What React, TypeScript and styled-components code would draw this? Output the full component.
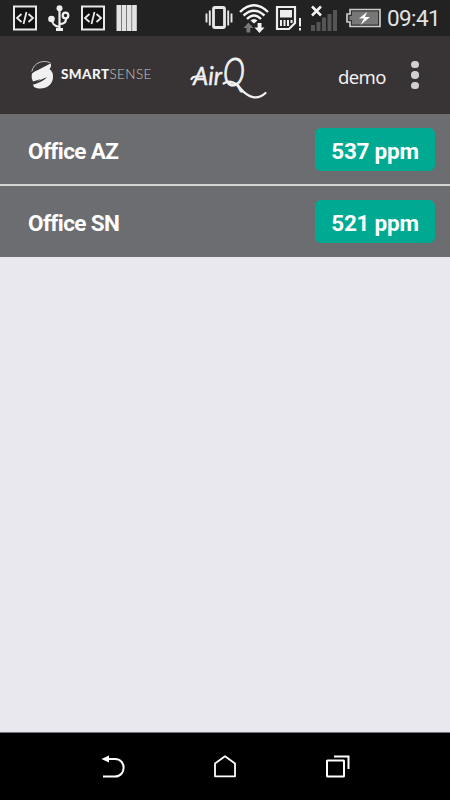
import styled, { createGlobalStyle } from 'styled-components';

const GlobalStyle = createGlobalStyle`
  * {
    box-sizing: border-box;
  }
  body {
    margin: 0;
    font-family: Roboto, "Open Sans", sans-serif;
  }
`;

const Screen = styled.div`
  display: flex;
  flex-direction: column;
  width: 450px;
  height: 800px;
  background: #e9e8ee;
`;

const StatusBar = styled.div`
  display: flex;
  justify-content: space-between;
  height: 36px;
  padding: 0 10px 0 12px;
  background: #222222;
`;

const IconGroup = styled.div<{ $gap: number }>`
  display: flex;
  align-items: center;
  gap: ${({ $gap }) => $gap}px;

  svg {
    display: block;
    flex: none;
  }
`;

const Clock = styled.span`
  width: 53px;
  font-size: 22.5px;
  line-height: 36px;
  letter-spacing: -0.6px;
  color: #e2e2e2;
  white-space: nowrap;
`;

const Header = styled.header`
  display: flex;
  align-items: center;
  height: 78px;
  padding: 0 22px 0 29px;
  background: #383435;
  color: #f0f0f0;
`;

const Brand = styled.div`
  display: flex;
  align-items: center;
  gap: 7px;
  width: 161px;
  height: 30px;
`;

const BrandName = styled.span`
  margin-top: -2px;
  font-family: Lato, sans-serif;
  font-size: 13.5px;
  line-height: 16px;
  letter-spacing: 0.4px;
  font-weight: 300;
  color: #c9c7c8;
  white-space: nowrap;

  b {
    font-weight: 900;
    color: #f4f4f4;
  }
`;

const User = styled.span`
  width: 69px;
  margin: 4px 0 0 68px;
  font-family: "Noto Sans", sans-serif;
  font-size: 18.5px;
  line-height: 24px;
  letter-spacing: -0.6px;
`;

const MenuButton = styled.button`
  display: flex;
  flex-direction: column;
  align-items: center;
  gap: 3px;
  width: 10px;
  margin: 0 0 0 3px;
  padding: 0;
  border: none;
  background: none;
  cursor: pointer;
`;

const Dot = styled.span`
  width: 7.5px;
  height: 7.5px;
  border-radius: 50%;
  background: #d0d0d0;
`;

const List = styled.main`
  flex: 1;
`;

const Row = styled.div`
  display: flex;
  align-items: center;
  justify-content: space-between;
  height: 70px;
  padding: 0 15px 0 28px;
  background: #6c6d70;
  color: #ffffff;

  & + & {
    height: 72.5px;
    border-top: 2px solid #d3d3d3;
  }
`;

const Place = styled.span`
  margin-top: 4px;
  font-size: 22.5px;
  font-weight: 700;
  letter-spacing: -0.6px;
`;

const Level = styled.span`
  display: flex;
  align-items: center;
  justify-content: center;
  width: 120px;
  height: 43px;
  border-radius: 6px;
  background: #00a991;
  padding-top: 3px;
  font-size: 22.5px;
  font-weight: 700;
  letter-spacing: -0.25px;
`;

const NavBar = styled.nav`
  display: flex;
  align-items: center;
  justify-content: center;
  gap: 88px;
  height: 68px;
  border-top: 1px solid #77767a;
  background: #000000;
`;

const places = [
  { name: 'Office AZ', level: 537 },
  { name: 'Office SN', level: 521 }
];

const CodeIcon = () => (
  <svg width="26" height="27" viewBox="0 0 26 27" fill="none" stroke="#e8e8e8">
    <rect x="2" y="1.5" width="22" height="23" fill="#111" strokeWidth="2" />
    <path d="M9.5 9 5 13l4.5 4M16.5 9l4.5 4-4.5 4M14.5 7l-3 12" strokeWidth="1.8" />
  </svg>
);

const UsbIcon = () => (
  <svg width="22" height="27" viewBox="0 0 22 27" fill="none" stroke="#efefef" strokeWidth="2.2">
    <path d="M11.5 3v22M4 14c0 5 2 7 7.5 8M18 14c0 3-2 5-6.5 5" />
    <circle cx="11.5" cy="3.2" r="3" fill="#efefef" stroke="none" />
    <circle cx="3.5" cy="14" r="3.3" fill="#efefef" stroke="none" />
    <circle cx="17.5" cy="10.5" r="2.8" />
    <path d="M8 24.5h7" strokeWidth="3" />
  </svg>
);

const BarsIcon = () => (
  <svg width="22" height="26" viewBox="0 0 22 26" fill="#e3e3e3">
    <rect x="0.5" width="4.7" height="26" />
    <rect x="5.7" width="4.7" height="26" />
    <rect x="10.9" width="4.7" height="26" />
    <rect x="16.1" width="4.7" height="26" />
  </svg>
);

const VibrateIcon = () => (
  <svg width="28" height="26" viewBox="0 0 28 26" fill="none" stroke="#e8e8e8">
    <rect x="8.5" y="2.5" width="11" height="20" rx="1.5" strokeWidth="2.8" />
    <path d="M1.5 8.5v9M4.8 5.500v15M23.2 5.500v15M26.5 8.500v9" strokeWidth="1.9" />
  </svg>
);

const WifiIcon = () => (
  <svg width="30" height="30" viewBox="0 0 30 30" fill="none" stroke="#f4f4f4" strokeWidth="2.4">
    <path d="M1 9Q15-4.5 29 9M4.5 12.5q10.5-9.5 21 0M8 16q7-7 14 0" />
    <path d="M11.500 17.500q3.500-3 7 0L15 20.500z" fill="#f4f4f4" stroke="none" />
    <path d="M9.500 19.500 14.500 25h-3.300v4.500H7.500V25H4.500z" fill="#777" stroke="none" />
    <path d="M20.500 30 25.500 24.500h-3V20h-3.900v4.500H15.500z" fill="#f4f4f4" stroke="none" />
  </svg>
);

const SimIcon = () => (
  <svg width="27" height="26" viewBox="0 0 27 26" fill="none" stroke="#eeeeee">
    <path d="M2 2h18v16l-6 6H2z" strokeWidth="2.2" />
    <path d="M5 5h12v7.500H5z" fill="#eeeeee" stroke="none" />
    <path d="M6 15v6M9.500 15v6M13 15v6M16.500 15v3" strokeWidth="2" />
    <path d="M25 13v8.500M25 23v2.500" strokeWidth="2" />
  </svg>
);

const SignalIcon = () => (
  <svg width="31" height="27" viewBox="0 0 31 27">
    <path d="M3 20h4v6H3zM8.500 17h4v9h-4zM14 12.500h4V26h-4zM19.500 9h4v17h-4zM25 5h4v21h-4z" fill="#555555" />
    <path d="M4 1.500l9 9M13 1.500l-9 9" stroke="#f4f4f4" strokeWidth="2.500" />
  </svg>
);

const BatteryIcon = () => (
  <svg width="36" height="20" viewBox="0 0 36 20">
    <path d="M5 1.500h30v17H5V14H2V6h3z" fill="#333333" stroke="#c9cbc6" strokeWidth="1.7" />
    <path d="M7 3.500h26v13H7v-4.500H4.500v-4H7z" fill="#777777" />
    <path d="m22 4-8 6.500h5L15.500 17 25 9h-5z" fill="#ffffff" />
  </svg>
);

const GlobeMark = () => (
  <svg width="25" height="32" viewBox="0 0 25 32">
    <path d="M2.8 12.500C4.500 4 14 0 21.500 4" fill="none" stroke="#bdbdbd" strokeWidth="1" />
    <path d="M2.8 15Q4 13 9 11l12.500-6.500q1.500 2.500-1 5.500 4 3 3.500 9C23 28 13 32 5 28L4 25.500 12 20l-8 2.500q-2-3.500-1.200-7.500z" fill="#f1f1f1" />
    <path d="M3.500 24.500 18 18q-3 4-13 7.500" fill="#383435" />
  </svg>
);

// wordmark with the tail of the Q swept out below it
const AirQLogo = () => (
  <svg width="80" height="56" viewBox="0 0 80 56" overflow="visible" fill="#f1f1f1">
    <g fontFamily="Lato, sans-serif" fontStyle="italic">
      <text x="3" y="37.500" fontSize="25" fontWeight="400" stroke="#f1f1f1" strokeWidth="0.4" textLength="29" lengthAdjust="spacingAndGlyphs">Air</text>
      <text transform="translate(33 38.5) scale(0.76 1)" fontSize="39" fontWeight="300" stroke="#f1f1f1" strokeWidth="1.1">Q</text>
    </g>
    <path d="M1.500 32q1-2.500 5-2.500h8M33.500 36.500c6-4 12-1 17 5 8 9.500 17 12 25 4.500" fill="none" stroke="#f1f1f1" strokeWidth="2.2" strokeLinecap="round" />
  </svg>
);

const BackIcon = () => (
  <svg width="25" height="24" viewBox="0 0 25 24" fill="none" stroke="#ffffff" strokeWidth="2">
    <path d="M6 4h9c11.500 0 11.500 17.500 0 17.500H3" />
    <path d="M1.500 4 9 .5v7z" fill="#ffffff" stroke="none" />
  </svg>
);

const HomeIcon = () => (
  <svg width="24" height="24" viewBox="0 0 24 24" fill="none" stroke="#ffffff" strokeWidth="1.8" strokeLinejoin="round">
    <path d="M12 1.200 22 8.500v12.800H2V8.500z" />
  </svg>
);

const RecentsIcon = () => (
  <svg width="25" height="24" viewBox="0 0 25 24" fill="none" stroke="#ffffff" strokeWidth="2">
    <rect x="2" y="5.500" width="17" height="16" rx="0.5" />
    <path d="M9 1.500h14.500V14" />
  </svg>
);

export default function App() {
  return (
    <>
      <GlobalStyle />
      <Screen>
        <StatusBar>
          <IconGroup $gap={10}>
            <CodeIcon />
            <UsbIcon />
            <CodeIcon />
            <BarsIcon />
          </IconGroup>
          <IconGroup $gap={6}>
            <VibrateIcon />
            <WifiIcon />
            <SimIcon />
            <SignalIcon />
            <BatteryIcon />
            <Clock>09:41</Clock>
          </IconGroup>
        </StatusBar>
        <Header>
          <Brand>
            <GlobeMark />
            <BrandName><b>SMART</b>SENSE</BrandName>
          </Brand>
          <AirQLogo />
          <User>demo</User>
          <MenuButton aria-label="Menu">
            <Dot />
            <Dot />
            <Dot />
          </MenuButton>
        </Header>
        <List>
          {places.map(({ name, level }) => (
            <Row key={name}>
              <Place>{name}</Place>
              <Level>{level} ppm</Level>
            </Row>
          ))}
        </List>
        <NavBar>
          <BackIcon />
          <HomeIcon />
          <RecentsIcon />
        </NavBar>
      </Screen>
    </>
  );
}
